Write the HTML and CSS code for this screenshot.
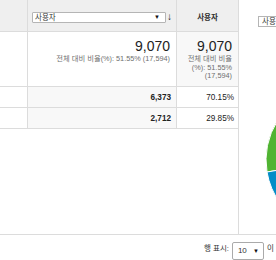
FILE: index.html
```html
<!DOCTYPE html>
<html lang="ko">
<head>
<meta charset="utf-8">
<link rel="stylesheet" href="styles.css">
</head>
<body>
<div class="report">
  <div class="frame">
    <div class="left">
      <div class="tbl">
        <div class="cell head c1"></div>
        <div class="cell head c2">
          <div class="sel"><span>사용자</span><span class="caret">▼</span></div>
          <span class="sort">↓</span>
        </div>
        <div class="cell head c3"><span class="hlabel">사용자</span></div>

        <div class="cell sum c1"></div>
        <div class="cell sum c2">
          <div class="big">9,070</div>
          <div class="sub">전체 대비 비율(%): 51.55% (17,594)</div>
        </div>
        <div class="cell sum c3 shade">
          <div class="big">9,070</div>
          <div class="sub">전체 대비 비율<br>(%): 51.55%<br>(17,594)</div>
        </div>

        <div class="cell row c1"></div>
        <div class="cell row c2 shade"><b>6,373</b></div>
        <div class="cell row c3">70.15%</div>

        <div class="cell row c1"></div>
        <div class="cell row c2 shade"><b>2,712</b></div>
        <div class="cell row c3">29.85%</div>
      </div>
    </div>
    <div class="right">
      <div class="rhead"><div class="sel2">사용자</div></div>
      <svg class="pie" width="200" height="202" viewBox="0 0 200 202">
        <path d="M100,129 L28,141 A73,73 0 1,1 133.1,194 Z" fill="#50B432" stroke="#fff" stroke-width="1"/>
        <path d="M100,129 L133.1,194 A73,73 0 0,1 28,141 Z" fill="#058DC7" stroke="#fff" stroke-width="1"/>
      </svg>
    </div>
  </div>
  <div class="footer">
    <span>행 표시:</span>
    <div class="sel3"><span>10</span><span class="caret">▼</span></div>
    <span>이</span>
  </div>
</div>
</body>
</html>
```
FILE: styles.css
```css
html, body {
  margin: 0;
  padding: 0;
  background: #fff;
  overflow: hidden;
}
.report {
  width: 420px;
  font-family: "Liberation Sans", Arial, "Noto Sans CJK KR", sans-serif;
  color: #222;
}
.frame {
  display: flex;
  height: 235px;
  box-sizing: border-box;
  border-bottom: 1px solid #dcdcdc;
}
.left {
  width: 239px;
  flex: none;
  box-sizing: border-box;
  border-right: 1px solid #dcdcdc;
}
.tbl {
  display: grid;
  grid-template-columns: 28px 149px 61px;
  grid-template-rows: 32px 55px 21px 21px;
}
.cell {
  box-sizing: border-box;
  border-bottom: 1px solid #dcdcdc;
}
.c1, .c2 {
  border-right: 1px solid #dcdcdc;
}
.head {
  background: #efefef;
}
.shade {
  background: #f8f8f8;
}
.head.c2 {
  display: flex;
  align-items: flex-start;
  padding: 12px 0 0 4px;
}
.sel {
  width: 134px;
  height: 11px;
  box-sizing: border-box;
  border: 1px solid #b5b5b5;
  border-radius: 1px;
  background: #fff;
  display: flex;
  justify-content: space-between;
  align-items: center;
  padding: 0 5px 0 2px;
  font-size: 7.5px;
  line-height: 9px;
  color: #333;
}
.caret {
  font-size: 6px;
  color: #111;
}
.sort {
  font-size: 10px;
  line-height: 10px;
  margin-left: 1px;
  color: #222;
  font-weight: bold;
}
.head.c3 {
  display: flex;
  justify-content: center;
  padding-top: 13px;
}
.hlabel {
  font-size: 7.5px;
  font-weight: bold;
  line-height: 9px;
  color: #333;
}
.sum {
  text-align: right;
  padding: 7px 6px 0 0;
}
.big {
  font-size: 14px;
  line-height: 14px;
  color: #222;
}
.sub {
  margin-top: 2px;
  font-size: 7.3px;
  line-height: 8.7px;
  color: #6f6f6f;
}
.row {
  display: flex;
  align-items: center;
  justify-content: flex-end;
  padding-right: 5px;
  font-size: 8.2px;
  color: #222;
}
.row.c3 {
  padding-right: 4px;
}
.right {
  flex: 1;
  display: flex;
  flex-direction: column;
}
.rhead {
  height: 31px;
  box-sizing: border-box;
  padding: 16px 0 0 19px;
}
.sel2 {
  width: 60px;
  height: 11px;
  box-sizing: border-box;
  border: 1px solid #b5b5b5;
  background: #fff;
  font-size: 7.5px;
  line-height: 9px;
  padding-left: 3px;
  color: #333;
}
.pie {
  display: block;
}
.footer {
  display: flex;
  align-items: center;
  height: 25px;
  padding-left: 204px;
  font-size: 7.5px;
  color: #333;
  gap: 3px;
}
.sel3 {
  width: 32px;
  height: 18px;
  box-sizing: border-box;
  border: 1px solid #aaa;
  border-radius: 2px;
  display: flex;
  align-items: center;
  justify-content: space-between;
  padding: 0 4px 0 5px;
  font-size: 8px;
  margin-top: 6px;
}
```
